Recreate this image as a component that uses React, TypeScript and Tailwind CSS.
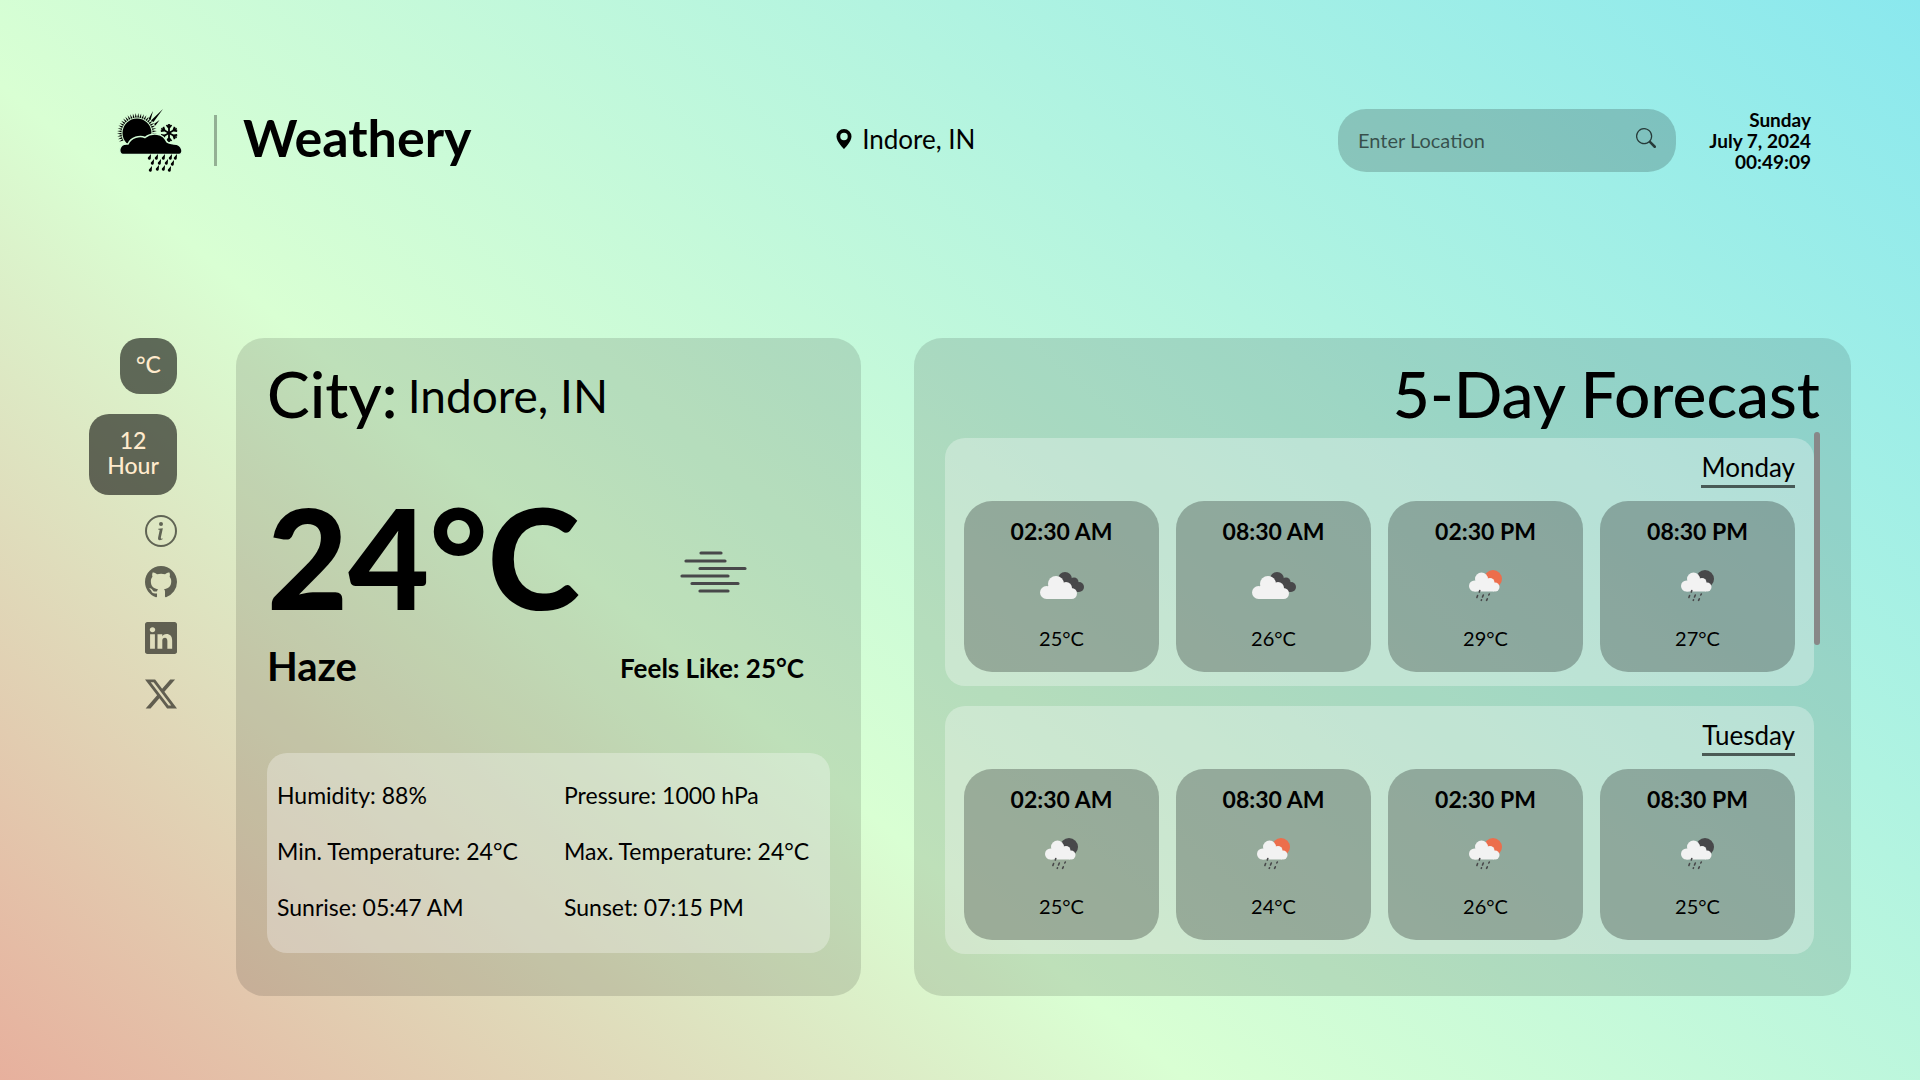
import React from "react";
import { BsGeoAltFill, BsGithub, BsInfoCircle, BsLinkedin, BsSearch, BsTwitterX } from "react-icons/bs";

type Kind = "clouds" | "rain-day" | "rain-night";

function WeatherIcon({ kind }: { kind: Kind }) {
  if (kind === "clouds") {
    return (
      <svg viewBox="0 0 44 28" className="h-7 w-11" aria-hidden="true">
        <g fill="#48484a">
          <circle cx="25" cy="7" r="7" />
          <circle cx="34" cy="10" r="4.5" />
          <circle cx="39" cy="15" r="5" />
          <path d="M24 7h10l5 13H24z" />
        </g>
        <g fill="#f2f2f2">
          <circle cx="16" cy="12" r="8" />
          <circle cx="26" cy="16" r="6" />
          <circle cx="6.5" cy="20.5" r="6.5" />
          <circle cx="31.5" cy="21.5" r="5.5" />
          <path d="M8 14L16 10L28 14L31.5 17V27H6.5z" />
        </g>
      </svg>
    );
  }
  return (
    <svg viewBox="0 0 34 32" className="h-8 w-[34px]" aria-hidden="true">
      <circle cx="24" cy="9" r="9" fill={kind === "rain-day" ? "#ec6e4c" : "#48484a"} />
      <g fill="#f2f2f2">
        <circle cx="12.5" cy="9" r="6.5" />
        <circle cx="21" cy="12.5" r="4.5" />
        <circle cx="5.5" cy="16" r="5.5" />
        <circle cx="26" cy="17" r="4.5" />
        <path d="M6 11L12 8L20 10L25 13V21.5H5.500z" />
      </g>
      <path
        d="M10.8 20.500l-.5 1.500M8.600 25.500l-.7 2M14.300 25l-.8 2M20.300 24l-.5 1M12.500 29.800l-.2 .5M18.300 28.800l-.7 1.500"
        stroke="#48484a"
        strokeWidth="1.600"
        strokeLinecap="round"
      />
    </svg>
  );
}

function Logo() {
  const rays = Array.from({ length: 27 }, (_, i) => i);
  const drops = [
    [34, 46], [41, 46], [48, 46], [55, 46], [60, 46], [37, 51], [44, 51], [51, 51], [57, 52],
    [35, 58], [42, 57], [48, 57], [54, 58],
  ];
  return (
    <svg viewBox="0 0 66 64" className="h-16 w-[66px] shrink-0" aria-hidden="true">
      {rays.map((i) => (
        <path key={i} d="M0 25l4.500 -.9v1.800z" transform={`rotate(${-26 + i * 8} 20 25)`} />
      ))}
      <path d="M34 12.500L46 1L36.500 14zM31.500 11L36 3L33.500 12zM37 16L42.500 12L38.500 17.500z" />
      <circle cx="20" cy="25" r="14.500" />
      <g stroke="#000" strokeWidth="1.8">
        {[0, 60, 120, 180, 240, 300].map((a) => (
          <path key={a} d="M52 25V16M49.500 17L52 20L54.500 17" fill="none" transform={`rotate(${a} 52 25)`} />
        ))}
      </g>
      <path
        d="M6 46.500C1 46.500 1 35 11 36C14 29 23 27 28 29.500C35 24 46 25 50 34C52 36 55 35 57 36C66 36 67 46.500 62 46.500z"
        stroke="#d3fcd6"
        strokeWidth="1.5"
      />
      {drops.map(([x, y]) => (
        <path key={`${x}-${y}`} d={`M${x} ${y}l-2.600 3a1.500 1.500 0 1 0 2.400 1z`} />
      ))}
    </svg>
  );
}

function HazeIcon() {
  return (
    <svg viewBox="0 0 68 44" className="h-11 w-[68px]" aria-label="Haze">
      <path
        d="M22 3H42M7 11H46M21 18.500H66M3 26H49M13 33.500H59M21 41H49"
        stroke="#48484a"
        strokeWidth="3.200"
        strokeLinecap="round"
      />
    </svg>
  );
}

type Slot = { time: string; kind: Kind; temp: string };
const days: { name: string; slots: Slot[] }[] = [
  {
    name: "Monday",
    slots: [
      { time: "02:30 AM", kind: "clouds", temp: "25°C" },
      { time: "08:30 AM", kind: "clouds", temp: "26°C" },
      { time: "02:30 PM", kind: "rain-day", temp: "29°C" },
      { time: "08:30 PM", kind: "rain-night", temp: "27°C" },
    ],
  },
  {
    name: "Tuesday",
    slots: [
      { time: "02:30 AM", kind: "rain-night", temp: "25°C" },
      { time: "08:30 AM", kind: "rain-day", temp: "24°C" },
      { time: "02:30 PM", kind: "rain-day", temp: "26°C" },
      { time: "08:30 PM", kind: "rain-night", temp: "25°C" },
    ],
  },
];

const details = [
  "Humidity: 88%",
  "Pressure: 1000 hPa",
  "Min. Temperature: 24°C",
  "Max. Temperature: 24°C",
  "Sunrise: 05:47 AM",
  "Sunset: 07:15 PM",
];

const socials = [
  { label: "GitHub", Icon: BsGithub },
  { label: "LinkedIn", Icon: BsLinkedin },
  { label: "X", Icon: BsTwitterX },
];

export default function App() {
  return (
    <div className="min-h-screen bg-[linear-gradient(40deg,#e7b09d_0%,#d9ffd3_37%,#8ae8ee_100%)] pt-[108px] pr-[69px] pb-[84px] pl-[89px] font-['Lato',sans-serif] text-black">
      <header className="flex items-center justify-between pr-10 pl-7">
        <div className="flex items-center">
          <Logo />
          <div className="mr-[26px] ml-[31px] h-[51px] w-[3px] bg-black/30" />
          <h1 className="pb-1.5 text-[52px] leading-[52px] font-bold">Weathery</h1>
        </div>
        <div className="flex items-center gap-2 pb-0.5 text-[26px] leading-8">
          <BsGeoAltFill className="h-5 w-5" />
          <span>Indore, IN</span>
        </div>
        <div className="flex items-center gap-6">
          <form className="flex h-[63px] w-[338px] items-center rounded-[28px] bg-black/18 px-5">
            <input
              aria-label="Enter Location"
              placeholder="Enter Location"
              className="min-w-0 flex-1 bg-transparent text-[20px] outline-none placeholder:text-black/60"
            />
            <button type="button" aria-label="Search" className="pb-1 text-black/70">
              <BsSearch className="h-5 w-5" />
            </button>
          </form>
          <div className="min-w-[111px] text-right text-[19px] leading-[21px] font-bold">
            <p>Sunday</p>
            <p>July 7, 2024</p>
            <p>00:49:09</p>
          </div>
        </div>
      </header>

      <main className="mt-[166px] flex items-stretch">
        <nav className="mr-[59px] flex w-[88px] shrink-0 flex-col items-end">
          <button type="button" className="h-14 w-[57px] rounded-[20px] bg-black/57 pb-1 text-[23px] font-medium text-[#ffebcd]">
            °C
          </button>
          <button
            type="button"
            className="mt-5 h-[81px] w-[88px] rounded-[20px] bg-black/57 pb-1 text-[23px] leading-[25px] font-medium text-[#ffebcd]"
          >
            <span className="block">12</span>
            <span className="block">Hour</span>
          </button>
          <button type="button" aria-label="About" className="mt-5 text-black/57">
            <BsInfoCircle className="h-8 w-8" />
          </button>
          <div className="mt-[19px] flex flex-col gap-6 text-black/57">
            {socials.map(({ label, Icon }) => (
              <a key={label} href="#" aria-label={label}>
                <Icon className="h-8 w-8" />
              </a>
            ))}
          </div>
        </nav>

        <section className="flex h-[658px] flex-[563] flex-col rounded-[28px] bg-black/12 px-[31px] pt-6">
          <h2 className="flex items-center gap-2.5 text-[64px] leading-[64px] font-medium">
            City: <span className="pt-1 text-[46px] leading-[60px] font-normal">Indore, IN</span>
          </h2>
          <div className="mt-[58px] flex items-center">
            <p className="text-[140px] leading-[144px] font-black">24°C</p>
            <div className="flex flex-1 justify-center pt-8 pl-4">
              <HazeIcon />
            </div>
          </div>
          <div className="mt-[18px] flex items-center justify-between pr-[26px]">
            <p className="text-[40px] leading-10 font-bold">Haze</p>
            <p className="pt-1 text-[26px] leading-8 font-bold">Feels Like: 25°C</p>
          </div>
          <div className="mt-auto mb-[43px] grid h-[200px] grid-cols-[287px_1fr] content-center gap-y-6 rounded-[20px] bg-white/30 px-2.5 pb-1 text-[23px] leading-8">
            {details.map((d) => (
              <p key={d} className="whitespace-nowrap">{d}</p>
            ))}
          </div>
        </section>

        <section className="ml-[53px] h-[658px] flex-[875] rounded-[28px] bg-black/12 px-[31px] pt-6">
          <h2 className="text-right text-[64px] leading-[64px] font-medium">5-Day Forecast</h2>
          <div className="relative mt-3 flex flex-col gap-5 pr-1.5">
            {days.map((day) => (
              <article key={day.name} className="h-[248px] rounded-[20px] bg-white/30 px-[19px] pt-[13px]">
                <div className="flex justify-end">
                  <h3 className="border-b-3 border-black/60 pb-0.5 text-[26px] leading-8">{day.name}</h3>
                </div>
                <div className="mt-[13px] grid grid-cols-4 gap-[17px]">
                  {day.slots.map((s) => (
                    <div key={s.time} className="flex h-[171px] flex-col items-center rounded-[28px] bg-black/26 pt-3.5">
                      <p className="text-[23px] leading-8 font-bold">{s.time}</p>
                      <div className="flex flex-1 items-center">
                        <WeatherIcon kind={s.kind} />
                      </div>
                      <p className="mb-5 text-[20px] leading-7">{s.temp}</p>
                    </div>
                  ))}
                </div>
              </article>
            ))}
            <div className="absolute -top-1.5 right-0 h-[213px] w-1.5 rounded-full bg-[#888]" />
          </div>
        </section>
      </main>
    </div>
  );
}
